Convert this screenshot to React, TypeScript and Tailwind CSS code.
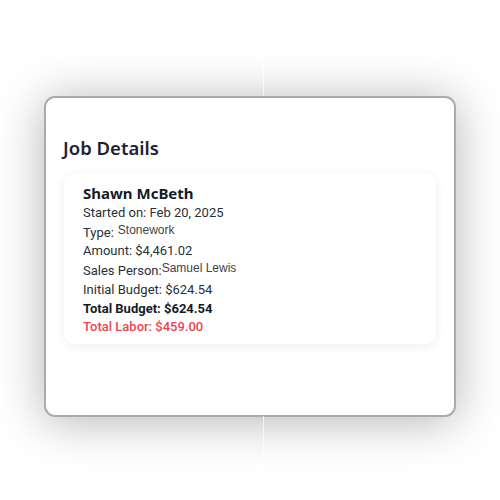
import React from 'react';

export default function App() {
  return (
    <div className="relative w-[500px] h-[500px] bg-white overflow-hidden" style={{ fontFamily: 'Roboto, "Liberation Sans", Arial, sans-serif' }}>
      {/* thin seam behind the dialog */}
      <div className="absolute left-[263px] top-0 h-[96px] w-px bg-white/70 z-20" />
      <div className="absolute left-[263px] top-[416px] h-[84px] w-px bg-white/70 z-20" />

      <div className="flex justify-center pt-[96px]">
        <div className="relative z-10 w-[412px] h-[321px] rounded-[11px] border-2 border-[#ababab] bg-white shadow-[0_4px_48px_rgba(0,0,0,0.3)] px-[18px] pt-[36px]">
          <h2 className="text-[18.5px] font-semibold text-[#1b2333] leading-7 -ml-px" style={{ fontFamily: '"Noto Sans", "Open Sans", sans-serif' }}>
            Job Details
          </h2>
          <div className="mt-[11px] rounded-[10px] bg-white shadow-[0_2px_10px_rgba(0,0,0,0.07)] px-[19px] pt-[10px] pb-[7px]">
            <div className="text-[15px] font-bold text-[#151b27] leading-[21px]" style={{ fontFamily: '"Noto Sans", "Open Sans", sans-serif' }}>
              Shawn McBeth
            </div>
            <div className="text-[13px] text-[#2a2f3a] leading-[18.7px]">
              <div>Started on: Feb 20, 2025</div>
              <div className="flex items-start">
                <span className="pt-[1px]">Type:</span>
                <span className="ml-[4px] text-[12px] leading-[15px] text-[#444]" style={{ fontFamily: '"Liberation Sans", Arial, sans-serif' }}>Stonework</span>
              </div>
              <div>Amount: $4,461.02</div>
              <div className="flex items-start">
                <span className="pt-[1px]">Sales Person:</span>
                <span className="text-[12px] leading-[15px] text-[#444]" style={{ fontFamily: '"Liberation Sans", Arial, sans-serif' }}>Samuel Lewis</span>
              </div>
              <div>Initial Budget: $624.54</div>
              <div className="font-bold text-[#151b27]">Total Budget: $624.54</div>
              <div className="font-medium text-[#f0444f]">Total Labor: $459.00</div>
            </div>
          </div>
        </div>
      </div>
    </div>
  );
}
